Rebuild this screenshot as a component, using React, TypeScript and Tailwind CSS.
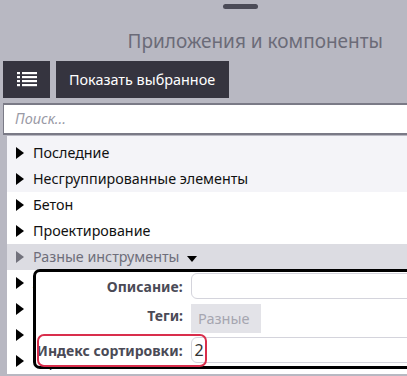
import React from "react";

const Tri = ({ color = "#000" }: { color?: string }) => (
  <svg width="8" height="12" viewBox="0 0 8 12" className="shrink-0">
    <path d="M0 0 L8 6 L0 12 Z" fill={color} />
  </svg>
);

const Row = ({ label, bg = "", muted = false, down = false }: { label: string; bg?: string; muted?: boolean; down?: boolean }) => (
  <div className={`h-[26px] flex items-center pl-[9px] ${bg}`}>
    <Tri color={muted ? "#72727c" : "#000"} />
    <span className={`ml-[9px] text-[14.3px] ${muted ? "text-[#6e6e7a]" : "text-[#111]"}`}>{label}</span>
    {down && (
      <svg width="10" height="6" viewBox="0 0 10 6" className="ml-[8px] mt-[3px]">
        <path d="M0 0 L10 0 L5 6 Z" fill="#000" />
      </svg>
    )}
  </div>
);

export default function App() {
  return (
    <div
      className="w-[407px] h-[376px] bg-[#b8b8c2] overflow-hidden relative"
      style={{ fontFamily: '"Noto Sans", "Open Sans", sans-serif' }}
    >
      <div className="pt-[4px] pl-[223px]">
        <div className="w-[35px] h-[5px] rounded-full bg-[#4b4b57]" />
      </div>
      <div className="mt-[20px] pr-[24px] text-right text-[19px] leading-[24px] text-[#6b6b78]">
        Приложения и компоненты
      </div>
      <div className="mt-[8px] flex gap-[6px] pl-[3px]">
        <div className="w-[47px] h-[37px] bg-[#35343f] flex items-center justify-center">
          <svg width="20" height="15" viewBox="0 0 20 15">
            {[0, 4, 8, 12].map((y) => (
              <g key={y}>
                <rect x="0" y={y} width="3" height="2.2" fill="#fff" />
                <rect x="5" y={y} width="15" height="2.2" fill="#fff" />
              </g>
            ))}
          </svg>
        </div>
        <div className="w-[173px] h-[37px] bg-[#35343f] flex items-center pl-[13px] text-white text-[14.4px]">
          Показать выбранное
        </div>
      </div>
      <div className="mt-[5px] ml-[3px] w-[420px] h-[32px] bg-white border border-[#7a7a86] border-t-2 border-b-2 flex items-center pl-[11px]">
        <span className="italic text-[14.5px] text-[#9a9aa6]">Поиск...</span>
      </div>
      <div className="mt-[1px] ml-[7px] bg-white">
        <div className="bg-[#f4f4f8] pt-[4px]">
          <Row label="Последние" />
          <Row label="Несгруппированные элементы" />
        </div>
        <Row label="Бетон" />
        <Row label="Проектирование" />
        <Row label="Разные инструменты" bg="bg-[#dcdce2]" muted down />
        <Row label="Аннотации" />
        <Row label="Вспомогательные" />
        <Row label="Общие" />
        <Row label="Строительство" />
      </div>
      <div className="absolute left-[33px] top-[269px] w-[400px] h-[100px] bg-white border-[3px] border-black rounded-[7px]">
        <div className="flex items-center h-[27px] pt-[1px]">
          <div className="w-[155px] text-right pr-[8px] text-[14px] font-bold text-[#4a4a56]">Описание:</div>
          <div className="w-[240px] h-[26px] border border-[#d4d4dc] rounded-[6px]" />
        </div>
        <div className="flex h-[29px] mt-[5px]">
          <div className="w-[155px] text-right pr-[8px] text-[14px] font-bold text-[#4a4a56] pt-[1px]">Теги:</div>
          <div className="w-[70px] h-[29px] bg-[#e3e3e8] flex items-center pl-[7px] text-[14.5px] text-[#a6a6b0]">Разные</div>
        </div>
        <div className="flex items-center h-[26px] mt-[4px] relative">
          <div className="absolute left-[1px] top-[-3px] w-[170px] h-[33px] border-2 border-[#d92e4c] rounded-[7px]" />
          <div className="w-[155px] text-right pr-[8px] text-[14px] font-bold text-[#4a4a56] whitespace-nowrap">Индекс сортировки:</div>
          <div className="w-[240px] h-[26px] border border-[#d4d4dc] rounded-[6px] flex items-center pl-[3px] text-[16px] text-[#333]">2</div>
        </div>
      </div>
    </div>
  );
}
